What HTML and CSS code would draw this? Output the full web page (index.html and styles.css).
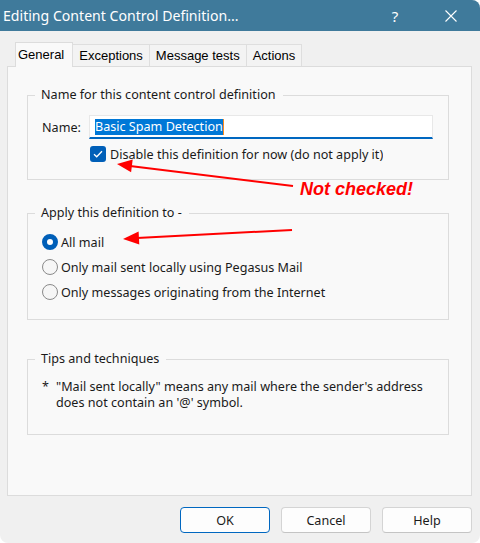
FILE: index.html
```html
<!DOCTYPE html>
<html lang="en">
<head>
    <meta charset="UTF-8">
    <title>Editing Content Control Definition...</title>
    <link rel="stylesheet" href="styles.css">
</head>
<body>
    <div class="window">
        <div class="titlebar">
            <span class="title">Editing Content Control Definition...</span>
            <span class="title-btn">?</span>
            <span class="title-btn">
                <svg width="12" height="12" viewBox="0 0 12 12"><path d="M0.5 0.5 L11.5 11.5 M11.5 0.5 L0.5 11.5" stroke="#fff" stroke-width="1.1" fill="none"/></svg>
            </span>
        </div>
        <div class="dialog">
            <div class="tabs">
                <div class="tab active">General</div>
                <div class="tab">Exceptions</div>
                <div class="tab">Message tests</div>
                <div class="tab">Actions</div>
            </div>
            <div class="panel">
                <fieldset class="group group-name">
                    <legend>Name for this content control definition</legend>
                    <div class="name-row">
                        <label>Name:</label>
                        <div class="name-input"><span class="selected">Basic Spam Detection</span><span class="caret"></span></div>
                    </div>
                    <div class="check-row">
                        <span class="checkbox">
                            <svg width="10" height="8" viewBox="0 0 10 8"><path d="M1 4.2 L3.7 6.8 L9 1.2" stroke="#fff" stroke-width="1.3" fill="none"/></svg>
                        </span>
                        <span class="check-label">Disable this definition for now (do not apply it)</span>
                    </div>
                </fieldset>

                <fieldset class="group group-apply">
                    <legend>Apply this definition to -</legend>
                    <div class="radio-row"><span class="radio checked"></span>All mail</div>
                    <div class="radio-row"><span class="radio"></span>Only mail sent locally using Pegasus Mail</div>
                    <div class="radio-row"><span class="radio"></span>Only messages originating from the Internet</div>
                </fieldset>

                <fieldset class="group group-tips">
                    <legend>Tips and techniques</legend>
                    <div class="tip">
                        <span class="bullet">*</span>
                        <span>"Mail sent locally" means any mail where the sender's address does not contain an '@' symbol.</span>
                    </div>
                </fieldset>
            </div>
            <div class="buttons">
                <button class="btn default">OK</button>
                <button class="btn">Cancel</button>
                <button class="btn">Help</button>
            </div>
        </div>

        <!-- red markup drawn over the screenshot -->
        <svg class="markup" width="480" height="543" viewBox="0 0 480 543">
            <line x1="293" y1="186" x2="130" y2="166" stroke="#f00" stroke-width="2"/>
            <polygon points="117,164 131.1,172.3 132.7,159.5" fill="#f00"/>
            <line x1="292" y1="230" x2="137" y2="238" stroke="#f00" stroke-width="2"/>
            <polygon points="123,239 139.3,244.6 138.6,231.6" fill="#f00"/>
        </svg>
        <div class="note">Not checked!</div>
    </div>
</body>
</html>
```

FILE: styles.css
```css
* {
    box-sizing: border-box;
}
body {
    margin: 0;
    background-color: #fff;
    font-family: "Noto Sans", "Open Sans", sans-serif;
    font-size: 12.6px;
    color: #1a1a1a;
}
.window {
    position: relative;
    width: 480px;
    height: 543px;
    background-color: #f0f0f0;
    border-radius: 0 8px 8px 8px;
    overflow: hidden;
}
.titlebar {
    height: 31px;
    background-color: #3f7a9b;
    color: #fff;
    display: flex;
    align-items: center;
    padding-left: 3px;
    font-size: 14.1px;
}
.title {
    flex: 1;
}
.title-btn {
    width: 56px;
    display: flex;
    justify-content: center;
    align-items: center;
    font-size: 15px;
}
.title-btn:last-child {
    margin-right: 1px;
}
.dialog {
    padding: 11px 8px 0 7px;
}
.tabs {
    display: flex;
    align-items: flex-end;
    margin-left: 8px;
    margin-bottom: -1px;
    position: relative;
    z-index: 1;
    font-family: "Liberation Sans", Arial, sans-serif;
    font-size: 13px;
    color: #000;
}
.tab {
    height: 22px;
    padding: 0 6px;
    margin-bottom: 1px;
    display: flex;
    align-items: center;
    background-color: #f3f3f3;
    border: 1px solid #dedede;
    border-bottom: none;
    margin-left: -1px;
}
.tab.active {
    height: 25px;
    margin-bottom: 0;
    margin-left: 0;
    padding: 0 8px 2px 2px;
    background-color: #f9f9f9;
    border-color: #dcdcdc;
}
.panel {
    height: 430px;
    background-color: #f9f9f9;
    border: 1px solid #dcdcdc;
    padding: 19px 22px 0 19px;
}
.group {
    margin: 0;
    border: 1px solid #dcdcdc;
    padding: 11px 15px 16px 14px;
}
.group legend {
    margin-left: -7px;
    padding: 0 7px 0 6px;
    line-height: 18px;
}
.name-row {
    display: flex;
    align-items: center;
    height: 24px;
}
.name-row label {
    width: 47px;
}
.name-input {
    flex: 1;
    height: 24px;
    background-color: #fff;
    border: 1px solid #e8e8e8;
    border-bottom: 2px solid #0067c0;
    display: flex;
    align-items: center;
    padding-left: 5px;
}
.selected {
    background-color: #0078d7;
    color: #fff;
    line-height: 16px;
}
.caret {
    width: 1px;
    height: 16px;
    background-color: #ff8c1a;
}
.check-row {
    display: flex;
    align-items: center;
    height: 18px;
    margin-top: 6px;
    margin-left: 48px;
}
.checkbox {
    width: 16px;
    height: 16px;
    border-radius: 3px;
    background-color: #005fb8;
    display: flex;
    align-items: center;
    justify-content: center;
    margin-right: 4px;
}
.check-label {
    width: 273px;
    white-space: nowrap;
    overflow: hidden;
}
.group-apply {
    margin-top: 24px;
    padding-top: 8px;
    padding-bottom: 14px;
}
.radio-row {
    display: flex;
    align-items: center;
    height: 24px;
    margin-bottom: 1px;
}
.radio {
    width: 16px;
    height: 16px;
    border-radius: 50%;
    border: 1px solid #8a8a8a;
    background-color: #f6f6f6;
    margin-right: 3px;
}
.radio.checked {
    border: 5px solid #005fb8;
    background-color: #fff;
}
.group-tips {
    margin-top: 30px;
    padding-bottom: 23px;
}
.tip {
    display: flex;
    line-height: 16px;
}
.bullet {
    width: 14px;
    flex: none;
}
.buttons {
    display: flex;
    justify-content: flex-end;
    gap: 11px;
    margin-top: 11px;
}
.btn {
    width: 90px;
    height: 26px;
    font-family: "Noto Sans", "Open Sans", sans-serif;
    font-size: 12.6px;
    color: #1a1a1a;
    background-color: #fdfdfd;
    border: 1px solid #d4d4d4;
    border-bottom-color: #c4c4c4;
    border-radius: 4px;
}
.btn.default {
    border: 1px solid #0067c0;
}
.markup {
    position: absolute;
    left: 0;
    top: 0;
    pointer-events: none;
}
.note {
    position: absolute;
    left: 300px;
    top: 179px;
    font-family: "Liberation Sans", Arial, sans-serif;
    font-size: 18px;
    line-height: 20px;
    font-weight: bold;
    font-style: italic;
    color: #f00;
}
```
